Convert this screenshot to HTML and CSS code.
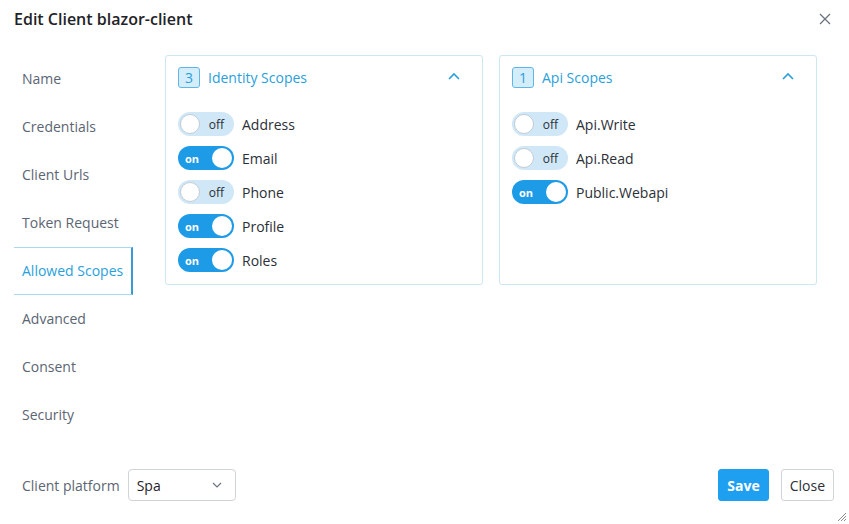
FILE: index.html
```html
<!DOCTYPE html>
<html lang="en">
<head>
    <meta charset="UTF-8">
    <meta name="viewport" content="width=device-width, initial-scale=1.0">
    <title>Edit Client blazor-client</title>
    <link rel="stylesheet" href="styles.css">
</head>
<body>
    <div class="dialog">
        <div class="dialog-header">
            <h1>Edit Client blazor-client</h1>
            <button class="close-x" type="button" aria-label="Close">
                <svg width="12" height="12" viewBox="0 0 12 12"><path d="M1 1L11 11M11 1L1 11" stroke="#6b7280" stroke-width="1.3" fill="none"/></svg>
            </button>
        </div>

        <div class="dialog-body">
            <ul class="nav">
                <li>Name</li>
                <li>Credentials</li>
                <li>Client Urls</li>
                <li>Token Request</li>
                <li class="active">Allowed Scopes</li>
                <li>Advanced</li>
                <li>Consent</li>
                <li>Security</li>
            </ul>

            <div class="panels">
                <div class="panel">
                    <div class="panel-header">
                        <span class="badge">3</span>
                        <span class="panel-title">Identity Scopes</span>
                        <svg class="chevron" width="12" height="8" viewBox="0 0 12 8"><path d="M1 7L6 2L11 7" stroke="#2a9fdc" stroke-width="1.6" fill="none"/></svg>
                    </div>
                    <div class="scope"><span class="toggle off"><i></i><b>off</b></span>Address</div>
                    <div class="scope"><span class="toggle on"><b>on</b><i></i></span>Email</div>
                    <div class="scope"><span class="toggle off"><i></i><b>off</b></span>Phone</div>
                    <div class="scope"><span class="toggle on"><b>on</b><i></i></span>Profile</div>
                    <div class="scope"><span class="toggle on"><b>on</b><i></i></span>Roles</div>
                </div>

                <div class="panel">
                    <div class="panel-header">
                        <span class="badge">1</span>
                        <span class="panel-title">Api Scopes</span>
                        <svg class="chevron" width="12" height="8" viewBox="0 0 12 8"><path d="M1 7L6 2L11 7" stroke="#2a9fdc" stroke-width="1.6" fill="none"/></svg>
                    </div>
                    <div class="scope"><span class="toggle off"><i></i><b>off</b></span>Api.Write</div>
                    <div class="scope"><span class="toggle off"><i></i><b>off</b></span>Api.Read</div>
                    <div class="scope"><span class="toggle on"><b>on</b><i></i></span>Public.Webapi</div>
                </div>
            </div>
        </div>

        <div class="dialog-footer">
            <label class="platform">Client platform</label>
            <div class="select">
                <span>Spa</span>
                <svg width="10" height="6" viewBox="0 0 10 6"><path d="M1 1L5 5L9 1" stroke="#6b7280" stroke-width="1.2" fill="none"/></svg>
            </div>
            <div class="actions">
                <button class="btn btn-primary" type="button">Save</button>
                <button class="btn" type="button">Close</button>
            </div>
        </div>

        <svg class="resize" width="12" height="12" viewBox="0 0 12 12"><path d="M11 3L3 11M11 6L6 11M11 9L9 11" stroke="#8a8f96" stroke-width="1" fill="none"/></svg>
    </div>
</body>
</html>
```

FILE: styles.css
```css
body {
    font-family: 'Open Sans', 'Liberation Sans', sans-serif;
    font-size: 14px;
    color: #2b2f36;
    background-color: #ffffff;
    margin: 0;
    padding: 0;
}

.dialog {
    position: relative;
    width: 849px;
    height: 524px;
    box-sizing: border-box;
}

.dialog-header {
    display: flex;
    align-items: center;
    justify-content: space-between;
    height: 37px;
    padding: 0 18px 0 14px;
}

.dialog-header h1 {
    margin: 0;
    font-size: 16px;
    font-weight: 600;
    color: #1f2328;
}

.close-x {
    border: none;
    background: none;
    padding: 0;
    display: flex;
    cursor: pointer;
}

.dialog-body {
    display: flex;
    gap: 32px;
    padding: 18px 31px 0 14px;
    height: 414px;
    box-sizing: border-box;
}

.nav {
    list-style: none;
    margin: 0;
    padding: 0;
    width: 119px;
    flex-shrink: 0;
}

.nav li {
    height: 48px;
    line-height: 48px;
    padding-left: 8px;
    color: #5b6573;
    box-sizing: border-box;
    white-space: nowrap;
}

.nav li.active {
    color: #2a9fdc;
    border-top: 1px solid #a9d9f1;
    border-bottom: 1px solid #a9d9f1;
    border-right: 2px solid #3a9ad6;
    line-height: 46px;
}

.panels {
    display: flex;
    gap: 16px;
    align-items: flex-start;
}

.panel {
    width: 318px;
    height: 230px;
    box-sizing: border-box;
    border: 1px solid #cce6f4;
    border-radius: 3px;
    padding: 10px 12px;
}

.panel-header {
    display: flex;
    align-items: center;
    height: 22px;
    margin-bottom: 24px;
}

.badge {
    width: 22px;
    height: 21px;
    box-sizing: border-box;
    border: 1px solid #5fb6e6;
    border-radius: 3px;
    background: #d4edfb;
    color: #2a9fdc;
    font-size: 14px;
    display: flex;
    align-items: center;
    justify-content: center;
    margin-right: 8px;
}

.panel-title {
    color: #2a9fdc;
    flex: 1;
}

.chevron {
    margin-right: 10px;
    margin-top: -3px;
}

.scope {
    display: flex;
    align-items: center;
    height: 24px;
    margin-bottom: 10px;
    color: #2b2f36;
}

.toggle {
    width: 56px;
    height: 24px;
    border-radius: 12px;
    box-sizing: border-box;
    display: flex;
    align-items: center;
    justify-content: space-between;
    margin-right: 8px;
    flex-shrink: 0;
}

.toggle i {
    width: 20px;
    height: 20px;
    border-radius: 50%;
    background: #ffffff;
    box-sizing: border-box;
}

.toggle b {
    font-size: 12px;
}

.toggle.off {
    background: #cfe7f7;
    padding: 0 10px 0 2px;
}

.toggle.off i {
    border: 1px solid #c3ccd4;
}

.toggle.off b {
    font-weight: 400;
    color: #2b2f36;
}

.toggle.on {
    background: #1d9be6;
    padding: 0 2px 0 7px;
}

.toggle.on b {
    font-size: 11px;
    font-weight: 700;
    color: #ffffff;
}

.dialog-footer {
    display: flex;
    align-items: center;
    padding: 18px 15px 0 22px;
}

.platform {
    color: #5b6573;
    margin-right: 8px;
}

.select {
    width: 108px;
    height: 32px;
    box-sizing: border-box;
    border: 1px solid #cfd4da;
    border-radius: 4px;
    display: flex;
    align-items: center;
    justify-content: space-between;
    padding: 0 13px 0 8px;
    color: #1f2328;
}

.actions {
    margin-left: auto;
    display: flex;
    gap: 12px;
}

.btn {
    height: 32px;
    padding: 0 8px;
    font-family: inherit;
    font-size: 14px;
    border: 1px solid #cfd4da;
    border-radius: 3px;
    background: #ffffff;
    color: #2b2f36;
    cursor: pointer;
}

.btn-primary {
    background: #1e9ff0;
    border-color: #1e9ff0;
    color: #ffffff;
    font-weight: 700;
}

.resize {
    position: absolute;
    right: 2px;
    bottom: 2px;
}
```
